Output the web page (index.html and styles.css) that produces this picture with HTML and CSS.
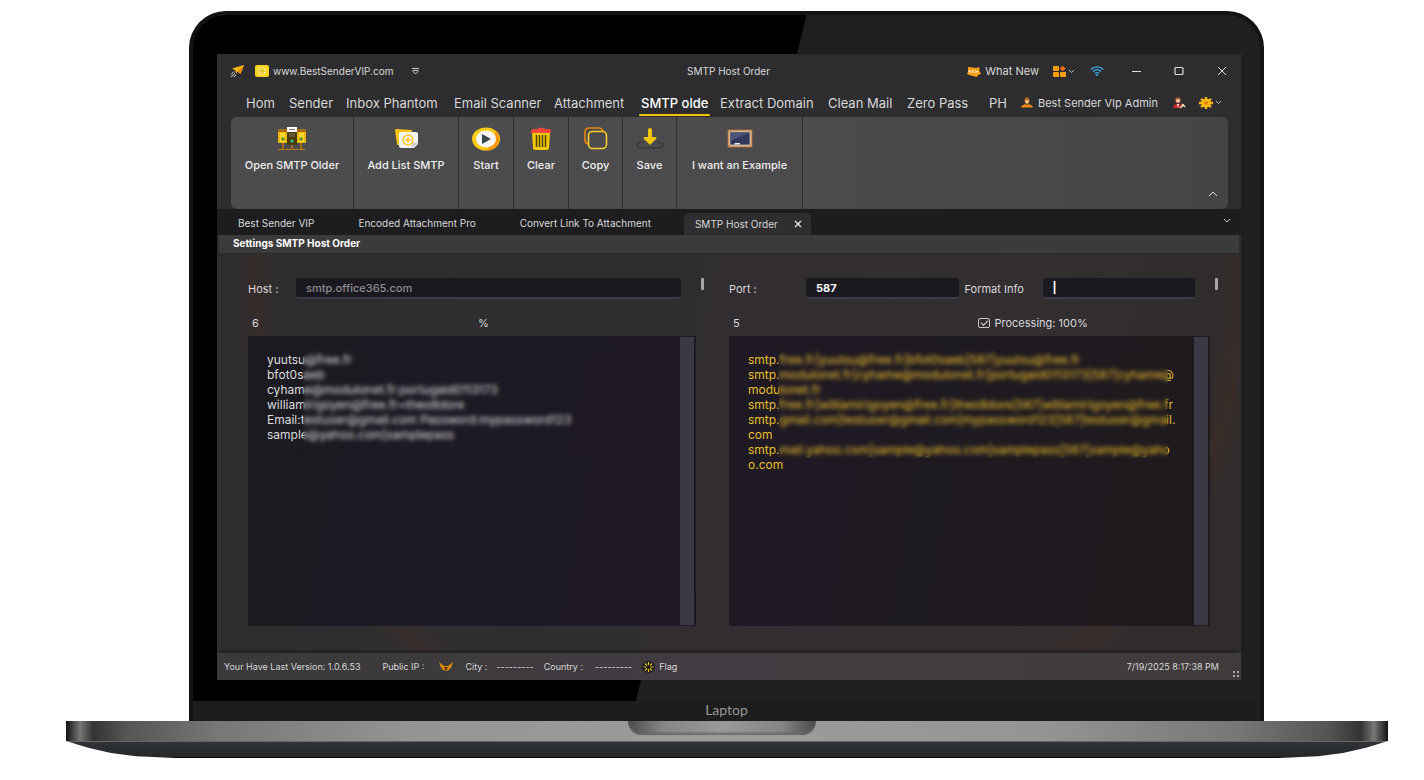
FILE: index.html
```
<!DOCTYPE html>
<html lang="en">
<head>
    <meta charset="UTF-8">
    <meta name="viewport" content="width=device-width, initial-scale=1.0">
    <title>SMTP Host Order</title>
    <link rel="stylesheet" href="styles.css">
</head>
<body>

<div class="laptop">
    <div class="lid">
        <div class="bezel">
            <div class="app">

                <!-- Title bar -->
                <header class="titlebar">
                    <div class="title-left">
                        <svg class="plane" width="14" height="14" viewBox="0 0 14 14"><path d="M14 1 10.500 10 7.500 7.500 6 10 5.500 6.500 2 4.500z" fill="#fdb913"/><path d="M14 1 7.500 7.500 10.500 10z" fill="#f08c00"/><path d="M1 10.500 4 7.500M1 13 5 9.500M4 13 6 11" stroke="#ddd" stroke-width="1"/></svg>
                        <svg class="site" width="14" height="12" viewBox="0 0 14 12"><rect width="14" height="12" rx="2" fill="#f9d41c"/><circle cx="7" cy="6" r="4" fill="#fff0a0"/><path d="M7 2v8M3 6h8M5 3c1 2 1 4 0 6M9 3c-1 2-1 4 0 6" stroke="#e5bd18" fill="none"/></svg>
                        <a href="#">www.BestSenderVIP.com</a>
                        <svg class="qat" width="7" height="7" viewBox="0 0 7 7"><path d="M0 .5h7M1 2.500h5v1L3.500 6 1 3.500z" fill="none" stroke="#ccc"/></svg>
                    </div>
                    <div class="title-center">SMTP Host Order</div>
                    <div class="title-right">
                        <button class="what-new"><svg width="14" height="11" viewBox="0 0 14 11"><path d="M1 1l9 1 1-1 2 1-1 2 2 4-3 1-1 2-8-2-2-1 1-2z" fill="#f9a01b"/><path d="M2 6.500v-2l1.500 2v-2M7 4.500H5.500v2H7M8 4.500l.7 2 .8-1.500.8 1.500.7-2" stroke="#fff3d0" stroke-width=".8" fill="none"/></svg>What New</button>
                        <button class="apps" aria-label="Apps"><svg width="13" height="11" viewBox="0 0 13 11"><rect width="6" height="5" rx="1" fill="#ffa000"/><rect y="6" width="6" height="5" rx="1" fill="#ffa000"/><rect x="7" y="6" width="6" height="5" rx="1" fill="#ffa000"/><path d="M9.500-.3 12.800 2.500 9.500 5.300 6.500 2.500z" fill="#ff6a13"/></svg><svg width="7" height="5" viewBox="0 0 7 5"><path d="M1 1l2.500 2.500L6 1" fill="none" stroke="#bbb"/></svg></button>
                        <svg class="wifi" width="14" height="10" viewBox="0 0 14 10"><path d="M.8 3.500C4.500 0 9.500 0 13.200 3.500M3 5.500c2.500-2.300 5.500-2.300 8 0M5 7.500c1.300-1.100 2.700-1.100 4 0" fill="none" stroke="#3da9e8" stroke-width="1.300"/><circle cx="7" cy="9" r="1" fill="#3da9e8"/></svg>
                        <button class="win" aria-label="Minimize"><svg width="10" height="10" viewBox="0 0 10 10"><path d="M1 5.500h9" stroke="#ddd"/></svg></button>
                        <button class="win" aria-label="Maximize"><svg width="10" height="10" viewBox="0 0 10 10"><rect x="1" y="1.500" width="8" height="7" rx="1" fill="none" stroke="#ddd" stroke-width="1.200"/></svg></button>
                        <button class="win" aria-label="Close"><svg width="10" height="10" viewBox="0 0 10 10"><path d="M1 1l8 8M9 1l-8 8" stroke="#ddd"/></svg></button>
                    </div>
                </header>

                <!-- Main menu -->
                <nav class="menu">
                    <a href="#">Hom</a>
                    <a href="#">Sender</a>
                    <a href="#">Inbox Phantom</a>
                    <a href="#">Email Scanner</a>
                    <a href="#">Attachment</a>
                    <a href="#" class="active">SMTP olde</a>
                    <a href="#">Extract Domain</a>
                    <a href="#">Clean Mail</a>
                    <a href="#">Zero Pass</a>
                    <a href="#">PH</a>
                    <a href="#" class="admin"><svg width="12" height="11" viewBox="0 0 12 11"><ellipse cx="6" cy="3.500" rx="2.500" ry="3.300" fill="#b5651d"/><path d="M4.500 3h3v2.500L6 7 4.500 5.500z" fill="#ffc98b"/><path d="M0 10.500C0 8.500 2 8 4.500 7L6 8l1.500-1C10 8 12 8.500 12 10.500z" fill="#f0881a"/></svg>Best Sender VIp Admin</a>
                    <a href="#" aria-label="Account"><svg width="13" height="12" viewBox="0 0 13 12"><circle cx="5" cy="3" r="2.800" fill="#a0522d"/><circle cx="5" cy="3.800" r="2" fill="#ffc9a0"/><path d="M0 11c0-3 2-4.500 5-4.500S9 8 9 11z" fill="#c62828"/><path d="M4 7h2l-1 4z" fill="#fff"/><path d="M7 11l4-3.500M9 7l3 3" stroke="#ffd9b0" stroke-width="1.500"/></svg></a>
                    <a href="#" class="gear" aria-label="Settings"><svg width="14" height="12" viewBox="0 0 14 12"><ellipse cx="7" cy="6" rx="4.800" ry="4.200" fill="#fdb913"/><path d="M7 0v12M0 6h14M2 1.800l10 8.400M12 1.800 2 10.200" stroke="#fdb913" stroke-width="2.400"/><circle cx="7" cy="6" r="1.800" fill="#e67700"/></svg><svg width="7" height="5" viewBox="0 0 7 5"><path d="M1 1l2.500 2.500L6 1" fill="none" stroke="#bbb"/></svg></a>
                </nav>

                <!-- Ribbon -->
                <div class="ribbon">
                    <button>
                        <svg width="28" height="24" viewBox="0 0 28 24"><path d="M0 22.500h28" stroke="#d17a00" stroke-dasharray="6 1"/><path d="M5 16v6M14 18v4M23 16v6" stroke="#a86a14" stroke-width="2"/><path d="M0 2h9v14H0zM19 2h9v14h-9z" fill="#e9b800"/><path d="M0 2h9v3H0zM19 2h9v3h-9z" fill="#a86a14"/><path d="M2 6h5v9H2zM21 6h5v9h-5z" fill="#fbd72e"/><path d="M9 4h10v14H9z" fill="#4a3c00"/><path d="M9 0h10v5H9z" fill="#fff"/><path d="M11 2.500h6M11 7h6M11 9h6" stroke="#777"/><circle cx="5" cy="12" r="1.700" fill="#5a8a20"/><circle cx="14" cy="14" r="1.500" fill="#2fc7a0"/><circle cx="23" cy="12" r="1.700" fill="#5a8a20"/></svg>
                        Open SMTP Older
                    </button>
                    <button>
                        <svg width="26" height="24" viewBox="0 0 26 24"><path d="M2 3q0-1 1-1l16 1-1 14-13 1q-1 0-1-1z" fill="#fcc310"/><path d="M8 5h15q2 0 2 2v10l-4 4H8q-2 0-2-2V7q0-2 2-2z" fill="#f4f4f6"/><path d="M25 16l-6 5v-4q0-1 1-1z" fill="#c9c9ce"/><circle cx="15" cy="13" r="5" fill="none" stroke="#f8ca28" stroke-width="1.600"/><path d="M15 10v6M12 13h6" stroke="#f8ca28" stroke-width="1.600"/></svg>
                        Add List SMTP
                    </button>
                    <button>
                        <svg width="28" height="24" viewBox="0 0 28 24"><ellipse cx="14" cy="12" rx="14" ry="11.500" fill="#fcca12"/><path d="M24 4c6 6 4 19-10 19.500Q18 22 24 4z" fill="#ff9800"/><ellipse cx="14" cy="12" rx="10" ry="8.500" fill="#f5f5f5"/><path d="M10 7l9 5-9 5z" fill="#37474f"/></svg>
                        Start
                    </button>
                    <button>
                        <svg width="22" height="24" viewBox="0 0 22 24"><path d="M2 6h18l-1 15q0 2-3 2H6q-3 0-3-2z" fill="#f0c808"/><path d="M6.500 8v12M9.500 8v12M12.500 8v12M15.500 8v12" stroke="#4c4300" stroke-width="1.500"/><path d="M7 2q4-3 8 0h5q1 1 1 4H1q0-3 1-4z" fill="#f4473c"/></svg>
                        Clear
                    </button>
                    <button>
                        <svg width="24" height="24" viewBox="0 0 24 24" fill="none" stroke-width="1.600"><path d="M4 17q-3-1-3-4V5q0-4 4-4h10q3 0 4 3" stroke="#e8850c"/><rect x="4.500" y="4.500" width="18" height="17" rx="4" stroke="#fbcd2a"/></svg>
                        Copy
                    </button>
                    <button>
                        <svg width="28" height="24" viewBox="0 0 28 24"><path d="M7 15q-6 0-6 3t6 3h14q6 0 6-3t-6-3" fill="none" stroke="#333" stroke-width="1.200"/><path d="M14 3v10" stroke="#f2c600" stroke-width="4" stroke-linecap="round"/><path d="M8 10h12q1 1 0 2l-6 6-6-6q-1-1 0-2z" fill="#f2c600"/></svg>
                        Save
                    </button>
                    <button>
                        <svg width="26" height="24" viewBox="0 0 26 24"><rect x="1.500" y="3.500" width="23" height="16" fill="#30375a" stroke="#d9924a" stroke-width="1.500"/><path d="M2.800 4.800h20.400v13.400H2.800z" fill="none" stroke="#fbe6c0"/><path d="M3.500 5.500h19L3.500 14z" fill="#4c5478"/><path d="M7 17.500h6V16H8z" fill="#eee"/></svg>
                        I want an Example
                    </button>
                    <button class="collapse" aria-label="Collapse ribbon"><svg width="10" height="6" viewBox="0 0 10 6"><path d="M1 5l4-4 4 4" fill="none" stroke="#ddd"/></svg></button>
                </div>

                <!-- Document tabs -->
                <nav class="tabs">
                    <a href="#">Best Sender VIP</a>
                    <a href="#">Encoded Attachment Pro</a>
                    <a href="#">Convert Link To Attachment</a>
                    <a href="#" class="current">SMTP Host Order <svg width="8" height="8" viewBox="0 0 8 8"><path d="M1 1l6 6M7 1l-6 6" stroke="#eee" stroke-width="1.200"/></svg></a>
                    <button aria-label="All tabs"><svg width="8" height="5" viewBox="0 0 8 5"><path d="M1 1l3 3 3-3" fill="none" stroke="#ccc"/></svg></button>
                </nav>

                <main>
                    <h1>Settings SMTP Host Order</h1>
                    <div class="columns">
                        <section>
                            <div class="fields">
                                <label class="host-label" for="host">Host :</label>
                                <input id="host" type="text" placeholder="smtp.office365.com">
                                <span class="mark"></span>
                            </div>
                            <div class="counts">
                                <span>6</span>
                                <span class="percent">%</span>
                            </div>
                            <div class="box box-in">
                                <textarea aria-label="Accounts" spellcheck="false">yuutsu@free.fr
bfot0saeb
cyhame@modulonet.fr:portugald0113173
williamirigoyen@free.fr=theo8dore
Email:testuser@gmail.com Password:mypassword123
sample@yahoo.com|samplepass</textarea>
                                <div class="scroll"></div>
                                <div class="censor"></div>
                            </div>
                        </section>
                        <section>
                            <div class="fields">
                                <label class="port-label" for="port">Port :</label>
                                <input id="port" type="text" value="587">
                                <label class="format-label" for="format">Format Info</label>
                                <input id="format" type="text" value="|">
                                <span class="mark"></span>
                            </div>
                            <div class="counts">
                                <span>5</span>
                                <label class="processing"><input type="checkbox" checked>Processing: 100%</label>
                            </div>
                            <div class="box box-out">
                                <textarea aria-label="Result" spellcheck="false">smtp.free.fr|yuutsu@free.fr|bfot0saeb|587|yuutsu@free.fr
smtp.modulonet.fr|cyhame@modulonet.fr|portugald0113173|587|cyhame@
modulonet.fr
smtp.free.fr|williamirigoyen@free.fr|theo8dore|587|williamirigoyen@free.fr
smtp.gmail.com|testuser@gmail.com|mypassword123|587|testuser@gmail.
com
smtp.mail.yahoo.com|sample@yahoo.com|samplepass|587|sample@yaho
o.com</textarea>
                                <div class="scroll"></div>
                                <div class="censor"></div>
                            </div>
                        </section>
                    </div>
                </main>

                <!-- Status bar -->
                <footer class="status">
                    <span class="version">Your Have Last Version: 1.0.6.53</span>
                    <span class="ip">Public IP :</span>
                    <svg class="wings" width="14" height="10" viewBox="0 0 14 10"><path d="M0 0q1 5 4 8l3 1 3-1q3-3 4-8l-5 4H5z" fill="#d98a0c"/><path d="M5 5h4L7 9z" fill="#5c3208"/></svg>
                    <span class="city">City :</span>
                    <span class="dashes">---------</span>
                    <span class="country">Country :</span>
                    <span class="dashes">---------</span>
                    <svg class="sun" width="13" height="12" viewBox="0 0 13 12"><ellipse cx="6.500" cy="6" rx="6.500" ry="6" fill="#1c1b1e"/><path d="M6.500 1v3M6.500 8v3M1.500 6h3M8.500 6h3M3 2.500l2 2M10 2.500l-2 2M3 9.500l2-2M10 9.500l-2-2" stroke="#e8c21c" stroke-width="1.200"/></svg>
                    <span>Flag</span>
                    <time>7/19/2025 8:17:38 PM</time>
                    <svg class="grip" width="6" height="6" viewBox="0 0 6 6"><path d="M0 0h2v2H0zM4 0h2v2H4zM0 4h2v2H0zM4 4h2v2H4z" fill="#aaa"/></svg>
                </footer>
            </div>
        </div>
        <div class="chin">Laptop</div>
    </div>
    <div class="base">
        <div class="deck"><div class="notch"></div></div>
        <div class="foot"></div>
    </div>
</div>

</body>
</html>
```
FILE: styles.css
```
* {
    margin: 0;
    padding: 0;
    box-sizing: border-box;
}

body {
    font-family: 'Inter', sans-serif;
    font-size: 11px;
    background-color: #fff;
    color: #d8d8da;
}

a {
    color: inherit;
    text-decoration: none;
}

button {
    font: inherit;
    color: inherit;
    background: none;
    border: none;
}

svg {
    display: block;
    flex: none;
}

/* Laptop */
.laptop {
    padding: 11px 36px 0 66px;
}

.lid {
    margin: 0 124px 0 123px;
    border: 4px solid #131315;
    border-bottom: none;
    border-radius: 37px 37px 0 0;
    background: #1e1e1e;
    overflow: hidden;
}

.bezel {
    position: relative;
    padding: 39px 19px 21px 24px;
    background: #1f1f1f;
}

/* black reflection on the left side of the bezel */
.bezel::before {
    content: "";
    position: absolute;
    inset: 0;
    background: #000;
    clip-path: polygon(0 0, 57.5% 0, 41.5% 100%, 0 100%);
}

.chin {
    height: 20px;
    line-height: 18px;
    font-family: 'Lato', sans-serif;
    font-size: 14px;
    text-align: center;
    color: #999;
    background: #1d1d1d;
}

.deck {
    height: 20px;
    padding-right: 10px;
    background: linear-gradient(90deg, #111 0, #777 14px, #353335 27px, #555 60px, #777 150px, #959595 350px, #9c9c9c 50%, #959595 calc(100% - 350px), #777 calc(100% - 150px), #555 calc(100% - 60px), #353335 calc(100% - 27px), #777 calc(100% - 14px), #111 100%);
}

.notch {
    width: 188px;
    height: 14px;
    margin: 0 auto;
    border-radius: 0 0 14px 14px;
    background: linear-gradient(90deg, #4a4a4a, #858585 18%, #9a9a9a 50%, #858585 82%, #4a4a4a);
    box-shadow: inset 0 -2px 3px #666;
}

.foot {
    height: 17px;
    border-top: 1px solid #666;
    border-bottom: 1px solid #090909;
    background: linear-gradient(#303337, #25272a);
    clip-path: polygon(0 0, 100% 0, calc(100% - 22px) 40%, calc(100% - 45px) 70%, calc(100% - 70px) 90%, calc(100% - 110px) 100%, 110px 100%, 70px 90%, 45px 70%, 22px 40%);
}

/* Application window */
.app {
    position: relative;
    background: #2d2d2f;
}

.titlebar {
    display: grid;
    grid-template-columns: 1fr auto 1fr;
    align-items: center;
    height: 34px;
    padding: 0 14px 0 13px;
    font-size: 10px;
}

.title-left, .title-right {
    display: flex;
    align-items: center;
}

.title-right {
    justify-content: flex-end;
}

.site {
    margin: 0 4px 0 11px;
}

.qat {
    margin-left: 19px;
}

.what-new {
    display: flex;
    align-items: center;
    gap: 4px;
    font-size: 11px;
}

.apps {
    display: flex;
    align-items: center;
    gap: 2px;
    margin: 0 15px 0 14px;
}

.wifi {
    margin-right: -6px;
}

.win {
    margin-left: 33px;
}

/* Menu */
.menu {
    display: grid;
    grid-template-columns: 43fr 57fr 108fr 100fr 87fr 79fr 108fr 79fr 82fr 32fr 152fr 26fr 24fr;
    height: 29px;
    padding: 0 18px 0 29px;
    font-size: 13px;
    line-height: 28px;
    white-space: nowrap;
}

.menu a {
    display: flex;
    align-items: center;
    justify-self: start;
}

.menu .active {
    position: relative;
    font-weight: 500;
    color: #fff;
}

.menu .active::after {
    content: "";
    position: absolute;
    left: -2px;
    right: -2px;
    bottom: 1px;
    height: 2px;
    border-radius: 1px;
    background: #f5c400;
}

.menu .admin {
    gap: 5px;
    font-size: 11px;
}

.gear {
    gap: 2px;
}

/* Ribbon */
.ribbon {
    display: grid;
    grid-template-columns: 123px 105px 55px 55px 54px 54px 126px 1fr;
    height: 92px;
    margin: 0 13px 0 14px;
    border-radius: 6px;
    background: linear-gradient(90deg, #4c4c4e, #4c4a4c 60%, #464446);
    overflow: hidden;
}

.ribbon button {
    display: flex;
    flex-direction: column;
    align-items: center;
    gap: 6px;
    padding-top: 10px;
    border-right: 1px solid #2e2e30;
    font-weight: 500;
    line-height: 16px;
    color: #eee;
    white-space: nowrap;
}

.ribbon .collapse {
    align-self: end;
    justify-self: end;
    padding: 0 10px 12px;
    border: none;
}

/* Document tabs */
.tabs {
    display: flex;
    align-items: flex-end;
    height: 26px;
    padding: 0 10px;
    background: #1d1d20;
    font-size: 10px;
    line-height: 22px;
}

.tabs a {
    padding: 0 11px 1px;
    margin-right: 22px;
}

.tabs .current {
    display: flex;
    align-items: center;
    gap: 16px;
    padding: 0 9px 0 11px;
    border-radius: 5px 5px 0 0;
    background: #2e2d30;
}

.tabs button {
    margin-left: auto;
    padding-bottom: 12px;
}

/* Content */
main {
    margin: 0 2px;
    background:
        radial-gradient(circle at 52% 10%, transparent 470px, rgba(90, 40, 25, 0.2) 495px, transparent 520px),
        linear-gradient(100deg, #2d2d2f 15%, #312d31 50%, #332e30 75%, #2f2c2b);
    border-bottom: 3px solid #252326;
}

h1 {
    height: 19px;
    padding-left: 14px;
    border-bottom: 1px solid #29292b;
    background: #3b3a3d;
    font-size: 10px;
    line-height: 17px;
    color: #fff;
}

.columns {
    display: grid;
    grid-template-columns: minmax(0, 448fr) minmax(0, 481fr);
    gap: 33px;
    padding: 24px 29px;
}

.fields {
    display: flex;
    align-items: center;
    height: 21px;
    margin-right: -8px;
}

.fields input {
    flex: 1;
    min-width: 0;
    height: 21px;
    padding: 0 10px;
    border: none;
    border-bottom: 2px solid #3c3a47;
    border-radius: 3px;
    background: #1b1920;
    font: 500 11px 'Inter', sans-serif;
    color: #fff;
}

#port, #format {
    font-weight: 700;
}

.fields input::placeholder {
    color: #8d8b90;
}

.host-label {
    width: 48px;
}

.port-label {
    width: 77px;
}

.format-label {
    width: 84px;
    padding-left: 6px;
}

.mark {
    align-self: flex-start;
    width: 3px;
    height: 12px;
    margin-left: 20px;
    border-radius: 1px;
    background: #a9a7aa;
}

.counts {
    display: grid;
    grid-template-columns: 1fr 1fr;
    align-items: center;
    height: 20px;
    margin: 14px 0 3px;
    padding-left: 4px;
}

.percent {
    padding-left: 4px;
}

.processing {
    display: flex;
    align-items: center;
    gap: 5px;
    padding-left: 6px;
}

.processing input {
    appearance: none;
    width: 12px;
    height: 10px;
    border: 1px solid #c9c7cb;
    border-radius: 2px;
}

.processing input:checked::before {
    content: "";
    display: block;
    width: 6px;
    height: 3px;
    margin: 1px 0 0 2px;
    border-left: 1px solid #ddd;
    border-bottom: 1px solid #ddd;
    transform: rotate(-45deg);
}

.box {
    position: relative;
    display: flex;
    height: 290px;
    padding: 1px 2px 1px 0;
    background: linear-gradient(100deg, #1b1a1f, #1c1a24 45%, #201925);
}

.box-out {
    background: linear-gradient(100deg, #1f1924, #1e1a20 55%, #1f1a1d);
}

.box textarea {
    flex: 1;
    min-width: 0;
    padding: 15px 0 0 19px;
    border: none;
    outline: none;
    resize: none;
    background: none;
    font: 12px/15px 'Inter', sans-serif;
    color: #dcdcde;
    white-space: pre;
    overflow: hidden;
}

.box-out textarea {
    color: #e6bf2b;
}

.scroll {
    width: 14px;
    background: #3c3845;
}

/* hides the private part of the lists */
.censor {
    position: absolute;
    top: 14px;
    left: 55px;
    right: 42px;
    height: 108px;
    backdrop-filter: blur(2px);
}

.box-out .censor {
    left: 49px;
}

/* Status bar */
.status {
    display: flex;
    align-items: center;
    height: 27px;
    padding: 0 2px 0 7px;
    background: linear-gradient(90deg, #3a393b, #423c42 50%, #403b3b);
    font-size: 9px;
    line-height: 28px;
    white-space: nowrap;
}

.ip {
    margin: 0 15px 0 22px;
}

.city {
    margin: 0 9px 0 12px;
}

.country {
    margin: 0 12px 0 10px;
}

.sun {
    margin: 0 4px 0 10px;
}

.status time {
    margin-left: auto;
}

.grip {
    align-self: flex-end;
    margin: 0 0 3px 14px;
}
```
